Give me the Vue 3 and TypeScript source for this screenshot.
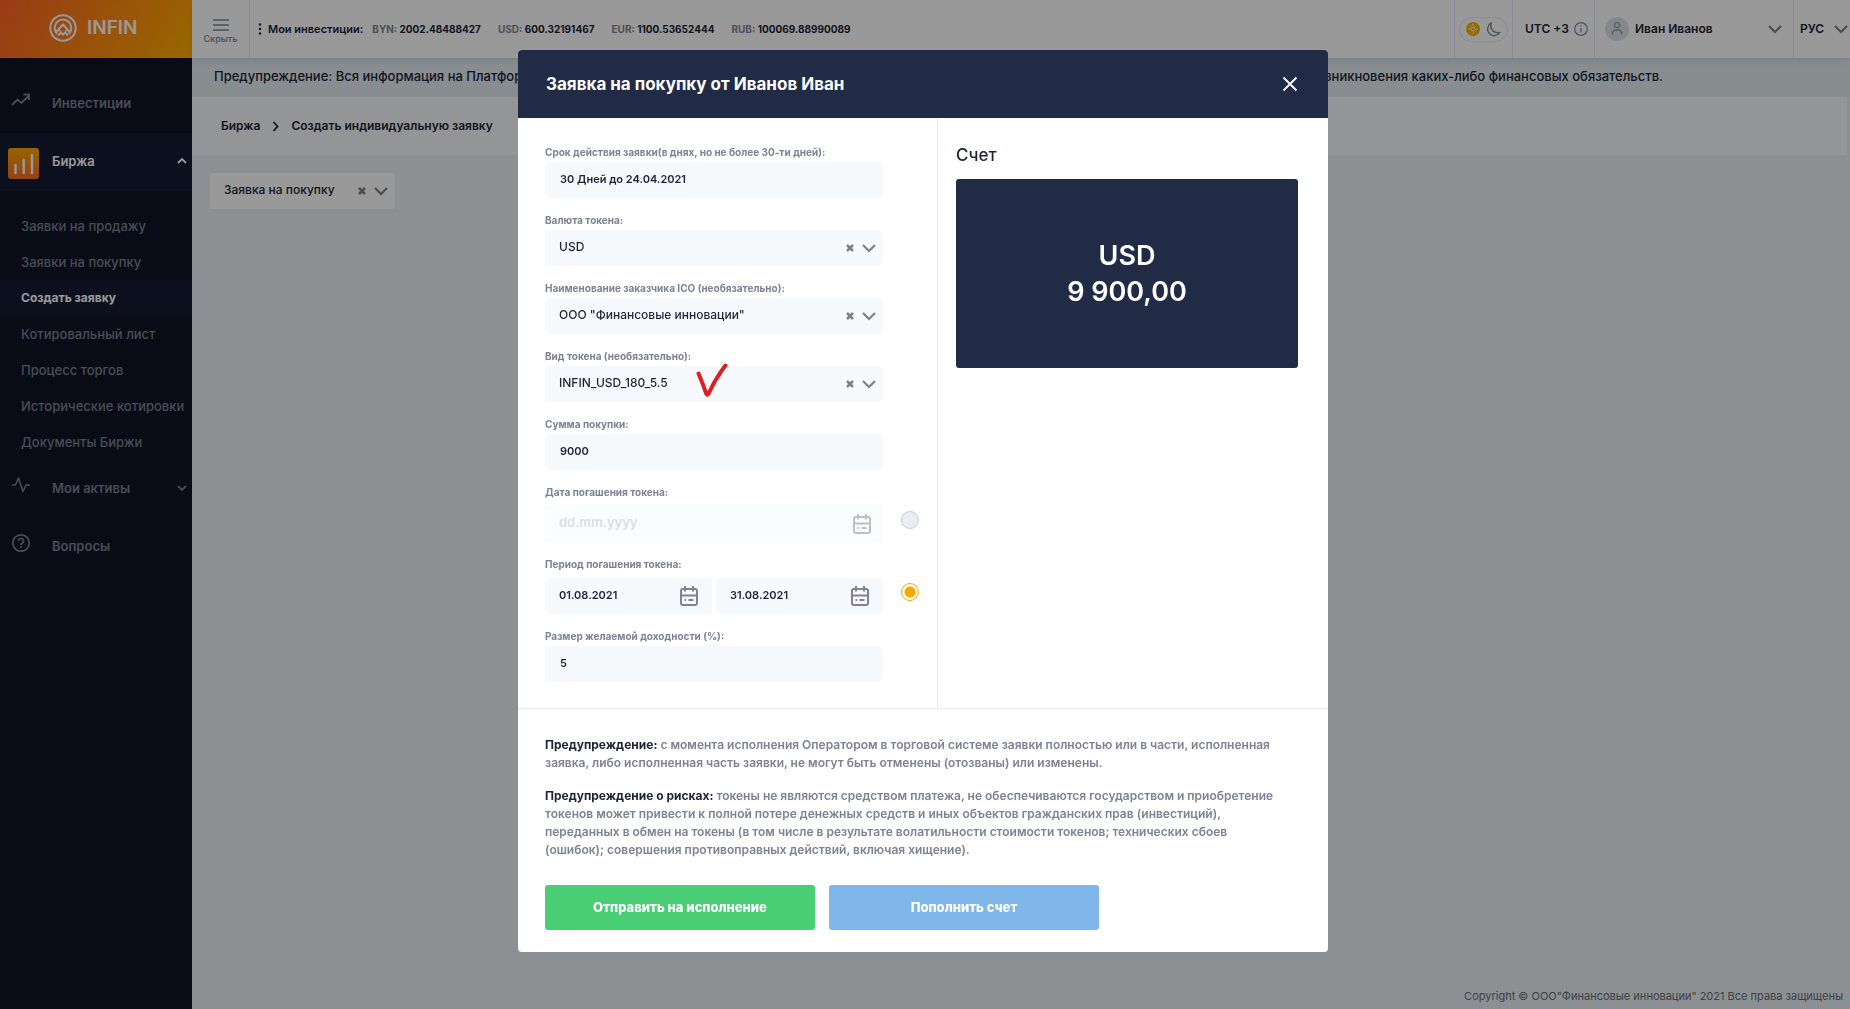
<script setup lang="ts">
import { ref } from 'vue'

interface Balance { code: string; amount: string }

const balances: Balance[] = [
  { code: 'BYN', amount: '2002.48488427' },
  { code: 'USD', amount: '600.32191467' },
  { code: 'EUR', amount: '1100.53652444' },
  { code: 'RUB', amount: '100069.88990089' },
]

const exchangeLinks: string[] = [
  'Заявки на продажу',
  'Заявки на покупку',
  'Создать заявку',
  'Котировальный лист',
  'Процесс торгов',
  'Исторические котировки',
  'Документы Биржи',
]
const activeLink = 'Создать заявку'

const term = ref('30 Дней до 24.04.2021')
const amount = ref('9000')
const dateFrom = ref('01.08.2021')
const dateTo = ref('31.08.2021')
const yieldPercent = ref('5')
const maturity = ref<'date' | 'period'>('period')

const selects = [
  { id: 'currency', label: 'Валюта токена:', value: 'USD', checked: false },
  { id: 'customer', label: 'Наименование заказчика ICO (необязательно):', value: 'ООО "Финансовые инновации"', checked: false },
  { id: 'token', label: 'Вид токена (необязательно):', value: 'INFIN_USD_180_5.5', checked: true },
]
</script>

<template>
  <div class="app">
    <aside class="sidebar">
      <a href="#" class="brand">
        <svg width="28" height="28" viewBox="0 0 28 28" fill="none" stroke="#fff">
          <circle cx="14" cy="14" r="12.7" stroke-width="2" />
          <path d="M8.2 19.8a8.3 8.3 0 1 1 11.6 0" stroke-width="2" />
          <path d="M6.5 18.5 14 10.5l7.5 8" stroke-width="2.2" />
          <path d="m9 21.5 2.8-3 2.2 2.2 2.2-2.2 2.8 3" stroke-width="2" />
          <path d="m9.5 15.2 2.2 2.6M18.5 15.2l-2.2 2.6" stroke-width="1.5" />
        </svg>
        <span>INFIN</span>
      </a>
      <nav class="nav">
        <a href="#" class="nav-item">
          <svg class="nav-icon" width="20" height="20" viewBox="0 0 20 20" fill="none" stroke="currentColor" stroke-width="1.8">
            <path d="m1 15 5.5-5.5 4 3.5L18 5.5M12.500 4.500H18v5.500" />
          </svg>
          <span>Инвестиции</span>
        </a>
        <a href="#" class="nav-item current">
          <svg class="tile" width="31" height="31" viewBox="0 0 31 31">
            <defs>
              <linearGradient id="tile" x1="0" y1="0" x2="0" y2="1">
                <stop offset="0" stop-color="#f9a800" /><stop offset="1" stop-color="#ff6a2b" />
              </linearGradient>
            </defs>
            <rect width="31" height="31" rx="3" fill="url(#tile)" />
            <path d="M7.500 17v8M15.700 12v13M24 7v18" stroke="#fff" stroke-width="2.400" stroke-linecap="round" />
          </svg>
          <span>Биржа</span>
          <svg class="nav-chevron" width="10" height="8" viewBox="0 0 10 8" fill="none" stroke="currentColor" stroke-width="1.800"><path d="m1 6 4-4 4 4" /></svg>
        </a>
        <ul class="subnav">
          <li v-for="link in exchangeLinks" :key="link">
            <a href="#" :class="{ active: link === activeLink }">{{ link }}</a>
          </li>
        </ul>
        <a href="#" class="nav-item">
          <svg class="nav-icon" width="20" height="20" viewBox="0 0 20 20" fill="none" stroke="currentColor" stroke-width="1.600" stroke-linejoin="round">
            <path d="M1 10h3.500L7.500 3l4.500 13.500L15 10h4" />
          </svg>
          <span>Мои активы</span>
          <svg class="nav-chevron" width="10" height="8" viewBox="0 0 10 8" fill="none" stroke="currentColor" stroke-width="1.800"><path d="m1 2 4 4 4-4" /></svg>
        </a>
        <a href="#" class="nav-item">
          <svg class="nav-icon" width="20" height="20" viewBox="0 0 20 20" fill="none" stroke="currentColor" stroke-width="1.800">
            <circle cx="10" cy="10" r="8.200" />
            <path d="M7.500 8a2.500 2.500 0 1 1 3.800 2.100c-.9.500-1.300.9-1.300 1.900M10 13.300v1.600" />
          </svg>
          <span>Вопросы</span>
        </a>
      </nav>
    </aside>

    <div class="page">
      <header class="topbar">
        <button type="button" class="collapse">
          <svg width="16" height="12" viewBox="0 0 16 12" stroke="#7a8596" stroke-width="1.500"><path d="M0 1h16M0 6h16M0 11h16" /></svg>
          <span>Скрыть</span>
        </button>
        <div class="balances">
          <svg width="4" height="12" viewBox="0 0 4 12" fill="#1d2435"><circle cx="2" cy="1.500" r="1.200" /><circle cx="2" cy="6" r="1.200" /><circle cx="2" cy="10.500" r="1.200" /></svg>
          <strong class="balances-title">Мои инвестиции:</strong>
          <span v-for="b in balances" :key="b.code" class="balance"><span class="code">{{ b.code }}:</span> {{ b.amount }}</span>
        </div>
        <div class="theme">
          <button type="button" class="theme-switch" aria-label="Тема">
            <svg width="14" height="14" viewBox="0 0 14 14" fill="none">
              <circle cx="7" cy="7" r="7" fill="#f9b200" />
              <circle cx="7" cy="7" r="2" stroke="#fff" />
              <path d="M7 2v1.600M7 10.400V12M2 7h1.600M10.400 7H12M3.500 3.500l1.100 1.100M9.400 9.400l1.100 1.100M3.500 10.500l1.100-1.100M9.400 4.600l1.100-1.100" stroke="#fff" />
            </svg>
            <svg width="15" height="15" viewBox="0 0 15 15" fill="none" stroke="#7f879a" stroke-width="1.400" stroke-linejoin="round">
              <path d="M5.300 1A6.700 6.700 0 1 0 14 10.500 7.200 7.200 0 0 1 5.300 1Z" />
            </svg>
          </button>
        </div>
        <div class="zone">
          <span>UTC +3</span>
          <svg width="14" height="14" viewBox="0 0 14 14" fill="none" stroke="#7f879a" stroke-width="1.200"><circle cx="7" cy="7" r="6.300" /><path d="M7 6v4.500M7 3.500v1.200" /></svg>
        </div>
        <button type="button" class="user">
          <svg width="24" height="24" viewBox="0 0 24 24" fill="none">
            <circle cx="12" cy="12" r="12" fill="#dde3ec" />
            <circle cx="12" cy="8" r="2.500" stroke="#8d97a8" stroke-width="1.200" />
            <path d="M7.300 17.500v-1a4.700 3.800 0 0 1 9.400 0v1" stroke="#8d97a8" stroke-width="1.400" />
          </svg>
          <span>Иван Иванов</span>
          <svg class="push" width="14" height="9" viewBox="0 0 14 9" fill="none" stroke="#808080" stroke-width="2.200"><path d="m1 1 6 6 6-6" /></svg>
        </button>
        <button type="button" class="lang">
          <span>РУС</span>
          <svg width="14" height="9" viewBox="0 0 14 9" fill="none" stroke="#808080" stroke-width="2.200"><path d="m1 1 6 6 6-6" /></svg>
        </button>
      </header>

      <p class="notice">
        <span>Предупреждение: Вся информация на Платформе</span>
        <span>возникновения каких-либо финансовых обязательств.</span>
      </p>

      <nav class="crumbs">
        <a href="#">Биржа</a>
        <svg width="7" height="11" viewBox="0 0 7 11" fill="none" stroke="#1d2435" stroke-width="1.800"><path d="m1.500 1 4 4.500-4 4.500" /></svg>
        <a href="#">Создать индивидуальную заявку</a>
      </nav>

      <main class="content">
        <div class="control order-type">
          <select aria-label="Тип заявки"><option>Заявка на покупку</option></select>
          <button type="button" class="clear" aria-label="Очистить">
            <svg width="8" height="8" viewBox="0 0 8 8" stroke="#808080" stroke-width="2.500"><path d="m1 1 6 6M7 1 1 7" /></svg>
          </button>
          <svg width="14" height="9" viewBox="0 0 14 9" fill="none" stroke="#808080" stroke-width="2.200"><path d="m1 1 6 6 6-6" /></svg>
        </div>
      </main>

      <footer class="footer">Copyright © ООО"Финансовые инновации" 2021 Все права защищены</footer>
    </div>

    <div class="overlay">
      <section class="modal" role="dialog" aria-labelledby="modal-title">
        <header class="modal-head">
          <h1 id="modal-title">Заявка на покупку от Иванов Иван</h1>
          <button type="button" aria-label="Закрыть">
            <svg width="16" height="16" viewBox="0 0 16 16" stroke="#fff" stroke-width="1.800"><path d="m1.500 1.500 13 13M14.500 1.500l-13 13" /></svg>
          </button>
        </header>

        <div class="modal-body">
          <form class="form">
            <div class="field">
              <label for="term">Срок действия заявки(в днях, но не более 30-ти дней):</label>
              <div class="control"><input id="term" v-model="term" type="text" /></div>
            </div>

            <div v-for="s in selects" :key="s.id" class="field">
              <label :for="s.id">{{ s.label }}</label>
              <div class="control pick">
                <select :id="s.id"><option>{{ s.value }}</option></select>
                <button type="button" class="clear" aria-label="Очистить">
                  <svg width="8" height="8" viewBox="0 0 8 8" stroke="#808080" stroke-width="2.500"><path d="m1 1 6 6M7 1 1 7" /></svg>
                </button>
                <svg width="14" height="9" viewBox="0 0 14 9" fill="none" stroke="#808080" stroke-width="2.200"><path d="m1 1 6 6 6-6" /></svg>
                <svg v-if="s.checked" class="tick" width="32" height="36" viewBox="0 0 32 36" fill="none" stroke="#d92027" stroke-width="4" stroke-linecap="round" stroke-linejoin="round">
                  <path d="M2.500 11.500c2.500 6 5 12 7.500 19.500.8 2.200 1.800 2.200 2.800.3C17 22 22 13 29.500 3.500" />
                </svg>
              </div>
            </div>

            <div class="field">
              <label for="amount">Сумма покупки:</label>
              <div class="control"><input id="amount" v-model="amount" type="text" /></div>
            </div>

            <div class="field dated">
              <label for="due">Дата погашения токена:</label>
              <div class="line">
                <div class="control date disabled">
                  <input id="due" type="text" placeholder="dd.mm.yyyy" disabled />
                  <svg class="calendar" width="18" height="20" viewBox="0 0 18 20" fill="none" stroke="currentColor" stroke-width="2"><rect x="1" y="3" width="16" height="16" rx="2" /><path d="M1 9.500h16M5 0v5.500M13 0v5.500M4.500 14h1.500M8.500 14h5" /></svg>
                </div>
                <input v-model="maturity" class="radio" type="radio" name="maturity" value="date" aria-label="Дата погашения токена" />
              </div>
            </div>

            <div class="field dated">
              <label for="from">Период погашения токена:</label>
              <div class="line">
                <div class="range">
                  <div class="control date">
                    <input id="from" v-model="dateFrom" type="text" />
                    <svg class="calendar" width="18" height="20" viewBox="0 0 18 20" fill="none" stroke="currentColor" stroke-width="2"><rect x="1" y="3" width="16" height="16" rx="2" /><path d="M1 9.500h16M5 0v5.500M13 0v5.500M4.500 14h1.500M8.500 14h5" /></svg>
                  </div>
                  <div class="control date">
                    <input v-model="dateTo" type="text" aria-label="Конец периода" />
                    <svg class="calendar" width="18" height="20" viewBox="0 0 18 20" fill="none" stroke="currentColor" stroke-width="2"><rect x="1" y="3" width="16" height="16" rx="2" /><path d="M1 9.500h16M5 0v5.500M13 0v5.500M4.500 14h1.500M8.500 14h5" /></svg>
                  </div>
                </div>
                <input v-model="maturity" class="radio" type="radio" name="maturity" value="period" aria-label="Период погашения токена" />
              </div>
            </div>

            <div class="field">
              <label for="yield">Размер желаемой доходности (%):</label>
              <div class="control"><input id="yield" v-model="yieldPercent" type="text" /></div>
            </div>
          </form>

          <section class="account">
            <h2>Счет</h2>
            <div class="card"><span>USD</span><span>9 900,00</span></div>
          </section>
        </div>

        <footer class="modal-foot">
          <p>
            <strong>Предупреждение:</strong> с момента исполнения Оператором в торговой системе заявки полностью или в части, исполненная<br />
            заявка, либо исполненная часть заявки, не могут быть отменены (отозваны) или изменены.
          </p>
          <p>
            <strong>Предупреждение о рисках:</strong> токены не являются средством платежа, не обеспечиваются государством и приобретение<br />
            токенов может привести к полной потере денежных средств и иных объектов гражданских прав (инвестиций),<br />
            переданных в обмен на токены (в том числе в результате волатильности стоимости токенов; технических сбоев<br />
            (ошибок); совершения противоправных действий, включая хищение).
          </p>
          <div class="actions">
            <button type="button" class="submit">Отправить на исполнение</button>
            <button type="button" class="topup">Пополнить счет</button>
          </div>
        </footer>
      </section>
    </div>
  </div>
</template>

<style>
body { margin: 0; }
</style>

<style scoped>
* { box-sizing: border-box; }
svg { display: block; flex: none; }
a { color: inherit; text-decoration: none; }
button { border: 0; padding: 0; background: none; font: inherit; color: inherit; cursor: pointer; }
h1, h2, p, ul { margin: 0; padding: 0; }
ul { list-style: none; }

.app {
  display: flex;
  min-height: 100vh;
  background: #ebf1f5;
  color: #1d2435;
  font-family: Inter, sans-serif;
  font-size: 12px;
  font-weight: 500;
  line-height: 18px;
  white-space: nowrap;
}

/* Sidebar */
.sidebar { flex: none; width: 192px; background: #0f1426; color: #78808f; font-weight: 600; }
.brand {
  display: flex;
  align-items: center;
  gap: 10px;
  height: 58px;
  padding: 0 0 2px 49px;
  background: linear-gradient(120deg, #ff6226, #ffad00);
  color: #fff;
  font-size: 19px;
}
.nav { padding-top: 17px; font-size: 13px; }
.nav-item { display: flex; align-items: center; height: 58px; padding: 0 5px 2px 11px; }
.nav-icon { margin: 0 21px 6px 0; }
.tile { margin: 4px 13px 0 -3px; }
.nav-chevron { margin-left: auto; }
.current, .subnav .active { background: #141b33; color: #fff; }
.subnav { padding-top: 17px; font-weight: 500; }
.subnav a { display: block; padding: 9px 21px; }
.subnav .active { font-size: 12px; font-weight: 700; }

/* Page frame */
.page { display: flex; flex: 1; flex-direction: column; min-width: 0; }
.topbar { position: relative; display: flex; align-items: stretch; height: 58px; background: #fff; box-shadow: 0 2px 6px rgba(60, 80, 110, .15); font-weight: 600; }
.collapse { display: flex; flex-direction: column; align-items: center; gap: 2px; width: 58px; padding-top: 19px; border-right: 1px solid #e3e8ee; color: #8790a0; font-size: 9px; line-height: 12px; }
.balances { display: flex; flex: 1; align-items: center; padding-left: 8px; font-size: 10px; font-weight: 700; }
.balances-title { margin: 0 9px 0 6px; font-size: 11px; font-weight: 600; }
.balance { margin-right: 17px; }
.code { color: #808490; }
.theme, .zone, .user, .lang { display: flex; align-items: center; border-left: 1px solid #e3e8ee; }
.theme { width: 58px; padding-left: 4px; }
.theme-switch { display: flex; align-items: center; gap: 6px; height: 25px; padding: 0 6px; border: 1px solid #e3e8ee; border-radius: 13px; }
.zone { gap: 5px; width: 82px; padding-left: 12px; }
.user { gap: 6px; width: 199px; padding-left: 10px; }
.push { margin-left: auto; margin-right: 11px; }
.lang { gap: 10px; width: 57px; padding-left: 6px; overflow: hidden; }

.notice { display: flex; justify-content: space-between; padding: 9px 187px 12px 22px; background: #e3ebf1; font-size: 13px; }
.crumbs { display: flex; align-items: center; gap: 12px; height: 58px; margin-right: 3px; padding-left: 29px; background: #f7f8fa; font-weight: 600; }
.content { flex: 1; padding: 18px; }
.footer { padding: 4px 7px 4px 0; color: #666b75; font-size: 11px; font-weight: 400; text-align: right; }

/* Controls */
.control { display: flex; align-items: center; height: 36px; padding: 0 7px 0 14px; border-radius: 3px; background: #f8f9fd; }
.control input, .control select { flex: 1; width: 100%; min-width: 0; height: 100%; padding: 0 0 2px; border: 0; outline: 0; background: none; appearance: none; color: #1d2435; font: inherit; }
.control input { font-size: 11px; font-weight: 600; }
.clear { margin-right: 8px; }
.order-type { width: 185px; background: #fff; }

/* Modal */
.overlay { position: fixed; inset: 0; padding: 50px 4px 0 0; overflow: auto; background: rgba(0, 0, 0, .4); }
.modal { width: 810px; margin: 0 auto; overflow: hidden; border-radius: 4px; background: #fff; }
.modal-head { display: flex; align-items: center; justify-content: space-between; height: 68px; padding: 0 30px 0 28px; background: #212b46; color: #fff; }
.modal-head h1 { font-size: 17px; font-weight: 700; line-height: 24px; }
.modal-body { display: flex; border-bottom: 1px solid #e9eaee; }
.form { width: 420px; padding: 24px 18px 14px 27px; border-right: 1px solid #e9eaee; }
.field { width: 338px; padding-bottom: 12px; }
.field label { display: block; color: #7d8294; font-size: 10px; font-weight: 700; line-height: 20px; }
.field .control { padding-left: 15px; }
.field .pick, .field .date { position: relative; padding-left: 14px; }
.tick { position: absolute; top: -4px; left: 151px; }
.dated { width: 374px; }
.dated label { padding-bottom: 4px; }
.line { display: flex; align-items: center; gap: 18px; }
.line > .control, .range { flex: 1; }
.range { display: flex; gap: 4px; }
.range .control { flex: 1; }
.field .date { padding-right: 14px; }
.field .disabled { padding-right: 12px; }
.calendar { color: #7d8294; }
.disabled { opacity: .5; }
.disabled input::placeholder { color: #b9bcc6; font-size: 13px; opacity: 1; }
.radio { display: block; flex: none; width: 18px; height: 18px; margin: 0 0 8px; border: 1px solid #c9cbd3; border-radius: 50%; background: #ebecf2; appearance: none; }
.radio:checked { border-color: #f9a800; background: radial-gradient(circle, #f9a800 5px, #fff 6px); }

.account { flex: 1; padding: 25px 30px 0 18px; }
.account h2 { font-size: 17px; font-weight: 500; line-height: 24px; }
.card { display: flex; flex-direction: column; align-items: center; justify-content: center; height: 189px; margin-top: 12px; border-radius: 3px; background: #212b46; color: #fff; font-size: 27px; font-weight: 600; line-height: 36px; }

.modal-foot { padding: 27px 27px 22px; color: #7d8294; font-weight: 600; }
.modal-foot strong { color: #1d2435; font-weight: 700; }
.modal-foot p + p { margin-top: 15px; }
.actions { display: flex; gap: 14px; margin-top: 26px; }
.actions button { width: 270px; height: 45px; padding-bottom: 2px; border-radius: 3px; color: #fff; font-size: 13px; font-weight: 800; }
.submit { background: #49ce75; }
.topup { background: #80b7eb; }
</style>
